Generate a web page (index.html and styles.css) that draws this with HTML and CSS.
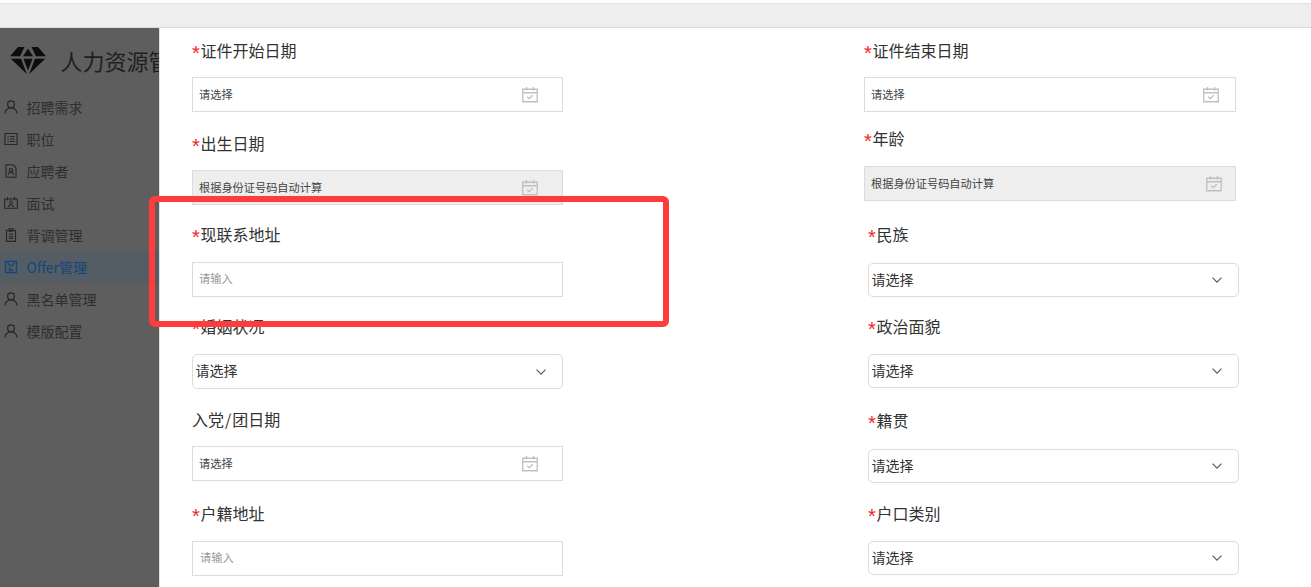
FILE: index.html
```html
<!DOCTYPE html>
<html lang="zh">
<head>
<meta charset="utf-8">
<title>人力资源管理</title>
<link rel="stylesheet" href="styles.css">
</head>
<body>
<svg class="defs" width="0" height="0" aria-hidden="true">
  <symbol id="cal" viewBox="0 0 16 16">
    <path d="M.75 2.750h14.500v12.500H.75zM.75 6.250h14.500M4.500.5v3.600M11.500.5v3.600M5.200 10.200l2 2 3.600-3.400" fill="none" stroke="currentColor" stroke-width="1.300"/>
  </symbol>
  <symbol id="chev" viewBox="0 0 10 6">
    <path d="M.5.7 5 5.200 9.500.7" fill="none" stroke="currentColor" stroke-width="1.100"/>
  </symbol>
  <symbol id="user" viewBox="0 0 14 14">
    <circle cx="7" cy="4.300" r="3.400" fill="none" stroke="currentColor" stroke-width="1.200"/>
    <path d="M1 13.500c.4-3.500 2.800-5.600 6-5.600s5.600 2.100 6 5.600" fill="none" stroke="currentColor" stroke-width="1.200"/>
  </symbol>
</svg>
<header class="topbar"></header>
<div class="shell">
  <aside class="sidebar">
    <div class="brand">
      <svg class="logo" viewBox="0 0 36 28">
        <path d="M8 0h6.500L10 9.200H0zM21.500 0H28l8 9.200H26zM18 1.500l5 7.700H13zM.8 11.700H11L16.800 27zM35.200 11.700H25L19.200 27zM13.500 11.700h9L18 23.500z" fill="#0d0d0d"/>
      </svg>
      <span class="brand-name">人力资源管理系统</span>
    </div>
    <nav class="menu">
      <a class="item"><svg class="ico"><use href="#user"/></svg>招聘需求</a>
      <a class="item"><svg class="ico" viewBox="0 0 14 14"><path d="M1 1.500h12v11H1zM3.500 4.500h1.300M6 4.500h4.500M3.500 7h1.300M6 7h4.500M3.500 9.500h1.300M6 9.500h4.500" fill="none" stroke="currentColor" stroke-width="1.100"/></svg>职位</a>
      <a class="item"><svg class="ico" viewBox="0 0 14 14"><path d="M2 .8h7l3 3v9.500H2zM4.300 10.800c.2-1.700 1.200-2.600 2.700-2.600s2.500.9 2.700 2.600" fill="none" stroke="currentColor" stroke-width="1.100"/><circle cx="7" cy="6.300" r="1.700" fill="none" stroke="currentColor" stroke-width="1.100"/></svg>应聘者</a>
      <a class="item"><svg class="ico" viewBox="0 0 14 14"><path d="M.7 3h12.600v9.300H.7zM3.500 1v3.200M10.500 1v3.200M4.500 11c.2-1.500 1.100-2.300 2.500-2.300s2.300.8 2.500 2.300" fill="none" stroke="currentColor" stroke-width="1.100"/><circle cx="7" cy="6.400" r="1.500" fill="none" stroke="currentColor" stroke-width="1"/></svg>面试</a>
      <a class="item"><svg class="ico" viewBox="0 0 14 14"><path d="M2.500 2.200h9v11.200h-9zM5 .8h4v2.400H5zM4.800 6h4.400M4.800 8.200h4.400M4.800 10.400h4.400" fill="none" stroke="currentColor" stroke-width="1.100"/></svg>背调管理</a>
      <a class="item active"><svg class="ico" viewBox="0 0 14 14"><path d="M1.500 1.300h11v11.400h-11zM4 1.500v2.300l3 2.200 3-2.200V1.500M4.500 10.500h5M5 8l2 2" fill="none" stroke="currentColor" stroke-width="1.300"/></svg>Offer管理</a>
      <a class="item"><svg class="ico"><use href="#user"/></svg>黑名单管理</a>
      <a class="item"><svg class="ico"><use href="#user"/></svg>模版配置</a>
    </nav>
  </aside>
  <main class="form">
    <section class="col col-left">
      <div class="field"><label class="lbl"><i>*</i>证件开始日期</label><div class="box date"><span>请选择</span><svg class="cal"><use href="#cal"/></svg></div></div>
      <div class="field g21"><label class="lbl"><i>*</i>出生日期</label><div class="box date off"><span>根据身份证号码自动计算</span><svg class="cal"><use href="#cal"/></svg></div></div>
      <div class="field g19 m16"><label class="lbl"><i>*</i>现联系地址</label><div class="box date ph"><span>请输入</span></div></div>
      <div class="field g19 m16"><label class="lbl"><i>*</i>婚姻状况</label><div class="box sel"><span>请选择</span><svg class="chev"><use href="#chev"/></svg></div></div>
      <div class="field g20"><label class="lbl">入党<span class="slash">/</span>团日期</label><div class="box date"><span>请选择</span><svg class="cal"><use href="#cal"/></svg></div></div>
      <div class="field g22 m16"><label class="lbl"><i>*</i>户籍地址</label><div class="box date ph ph-wide"><span>请输入</span></div></div>
    </section>
    <section class="col col-right">
      <div class="field"><label class="lbl"><i>*</i>证件结束日期</label><div class="box date"><span>请选择</span><svg class="cal"><use href="#cal"/></svg></div></div>
      <div class="field g16 m16"><label class="lbl"><i>*</i>年龄</label><div class="box date off age"><span>根据身份证号码自动计算</span><svg class="cal"><use href="#cal"/></svg></div></div>
      <div class="field g23 m17 nudge"><label class="lbl"><i>*</i>民族</label><div class="box sel"><span>请选择</span><svg class="chev"><use href="#chev"/></svg></div></div>
      <div class="field g19 m16 nudge"><label class="lbl"><i>*</i>政治面貌</label><div class="box sel"><span>请选择</span><svg class="chev"><use href="#chev"/></svg></div></div>
      <div class="field g22 m17 nudge"><label class="lbl"><i>*</i>籍贯</label><div class="box sel"><span>请选择</span><svg class="chev"><use href="#chev"/></svg></div></div>
      <div class="field g20 m16 nudge"><label class="lbl"><i>*</i>户口类别</label><div class="box sel"><span>请选择</span><svg class="chev"><use href="#chev"/></svg></div></div>
    </section>
  </main>
</div>
<div class="callout"></div>
</body>
</html>
```
FILE: styles.css
```css
* { box-sizing: border-box; }
html, body { height: 100%; }
body {
  margin: 0;
  height: 587px;
  overflow: hidden;
  background: #fff;
  font-family: "Noto Sans CJK SC", "Liberation Sans", sans-serif;
  color: #333;
  display: flex;
  flex-direction: column;
}
.defs { position: absolute; }
.topbar {
  height: 25px;
  flex: none;
  margin-top: 3px;
  background: #eeeeee;
  border-top: 1px solid #e2e2e2;
  border-bottom: 1px solid #d9d9d9;
}
.shell { flex: 1; display: flex; min-height: 0; }
.sidebar {
  width: 160px;
  flex: none;
  background: #5e5e5e;
  border-right: 1px solid #e0e0e0;
  overflow: hidden;
  color: #2b2b2b;
}
.brand {
  display: flex;
  align-items: center;
  height: 28px;
  margin-top: 19px;
  padding-left: 10px;
  white-space: nowrap;
}
.logo { width: 36px; height: 28px; flex: none; }
.brand-name { margin-left: 14.500px; font-size: 22px; line-height: 26px; height: 28px; color: #1f1f1f; }
.menu { margin-top: 16px; display: flex; flex-direction: column; }
.item {
  display: flex;
  align-items: center;
  height: 32px;
  padding-left: 4px;
  font-size: 14px;
  line-height: 18px;
  color: #2e2e2e;
  white-space: nowrap;
}
.ico { width: 14px; height: 14px; margin-right: 8.500px; flex: none; color: #262626; }
.item.active { background: #555d64; color: #12467e; }
.item.active .ico { color: #12467e; }

.form { flex: 1; display: flex; min-width: 0; padding-top: 12px; }
.col { display: flex; flex-direction: column; width: 375px; flex: none; }
.col-left { margin-left: 32px; }
.col-right { margin-left: 297px; }
.field { width: 371px; }
.lbl {
  display: block;
  height: 22px;
  line-height: 20px;
  margin-bottom: 15px;
  font-size: 16px;
  color: #333;
  white-space: nowrap;
}
.lbl i {
  display: inline-block;
  width: 8.500px;
  font-family: "Liberation Sans", sans-serif;
  font-size: 20px;
  line-height: 1;
  font-style: normal;
  vertical-align: -3px;
  color: #f5222d;
}
.slash { margin: 0 1px; }
.g16 { margin-top: 16px; }
.g19 { margin-top: 19px; }
.g20 { margin-top: 20px; }
.g21 { margin-top: 21px; }
.g22 { margin-top: 22px; }
.g23 { margin-top: 23px; }
.m16 .lbl { margin-bottom: 16px; }
.m17 .lbl { margin-bottom: 17px; }
.nudge { margin-left: 4px; }
.nudge .box { height: 34px; }
.box { display: flex; align-items: center; height: 35px; background: #fff; line-height: 15px; }
.date {
  width: 371px;
  padding: 0 24px 0 6px;
  border: 1px solid #dcdcdc;
  font-size: 11.200px;
  color: #444;
  justify-content: space-between;
}
.date.ph span { padding-bottom: 2px; }
.col-right .date { width: 372px; padding-right: 16px; }
.col-right .date.age { padding-right: 13px; }
.date.off { background: #eeeeee; }
.date.ph { color: #999; }
.date.ph-wide { padding-left: 7px; }
.cal { width: 16px; height: 17px; color: #bfbfbf; }
.sel {
  width: 371px;
  padding: 0 16px 0 2.500px;
  border: 1px solid #dcdcdc;
  border-radius: 5px;
  font-size: 14px;
  color: #333;
  justify-content: space-between;
}
.sel span { padding-bottom: 2px; }
.chev { width: 10px; height: 6px; color: #555; }
.callout {
  position: absolute;
  left: 149px;
  top: 196px;
  width: 520px;
  height: 131px;
  border: 6px solid #ff3b3b;
  border-radius: 6px;
  pointer-events: none;
}
```
